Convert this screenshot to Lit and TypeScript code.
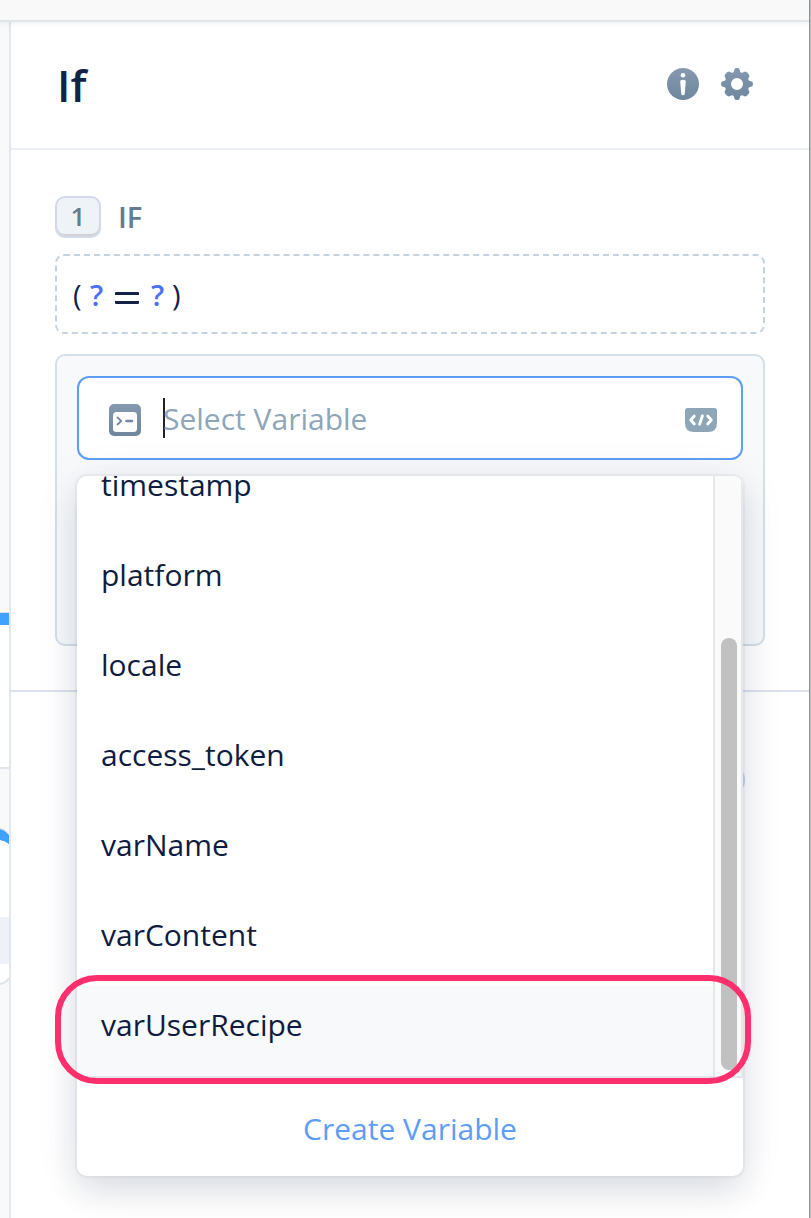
import { LitElement, html, css, svg } from "lit";
import { customElement } from "lit/decorators.js";
import { classMap } from "lit/directives/class-map.js";

const VARIABLES = ["timestamp", "platform", "locale", "access_token", "varName", "varContent", "varUserRecipe"];

const steel = (id: string) => svg`<defs><linearGradient id=${id} x1="0" y1="0" x2="0" y2="1">
  <stop offset="0" stop-color="#8599b0"></stop><stop offset="1" stop-color="#6e869d"></stop></linearGradient></defs>`;

const infoIcon = html`<svg width="32" height="32" viewBox="0 0 32 32">${steel("gi")}
  <circle cx="16" cy="16" r="16" fill="url(#gi)"></circle>
  <circle cx="16" cy="7.3" r="2.3" fill="#fff"></circle>
  <path d="M13.2 13.6Q13.2 11.7 16 11.7Q18.8 11.7 18.8 13.6L17.7 25.9Q17.6 27.2 16 27.2Q14.4 27.2 14.3 25.9Z" fill="#fff"></path></svg>`;

const gearIcon = html`<svg width="32" height="32" viewBox="0 0 32 32">${steel("gg")}
  <path fill="url(#gg)" fill-rule="evenodd" d="M13.5 1.2Q13.7 0 16 0Q18.3 0 18.5 1.2L19 3.2Q19.8 5.4 21.8 4.6L23.6 3.7Q25 3 26.8 5.2Q29 7 28.3 8.4L27.4 10.2Q26.6 12.2 28.8 13L30.8 13.5Q32 13.7 32 16Q32 18.3 30.8 18.5L28.8 19Q26.6 19.8 27.4 21.8L28.3 23.6Q29 25 26.8 26.8Q25 29 23.6 28.3L21.8 27.4Q19.8 26.6 19 28.8L18.5 30.8Q18.3 32 16 32Q13.7 32 13.5 30.8L13 28.8Q12.2 26.6 10.2 27.4L8.4 28.3Q7 29 5.2 26.8Q3 25 3.7 23.6L4.6 21.8Q5.4 19.8 3.2 19L1.2 18.5Q0 18.3 0 16Q0 13.7 1.2 13.5L3.2 13Q5.4 12.2 4.6 10.2L3.7 8.4Q3 7 5.2 5.2Q7 3 8.4 3.7L10.2 4.6Q12.2 5.4 13 3.2ZM16 10A6 6 0 1 0 16 22A6 6 0 1 0 16 10Z"></path></svg>`;

const consoleIcon = html`<svg width="32" height="32" viewBox="0 0 32 32">${steel("gc")}
  <rect width="32" height="32" rx="5" fill="url(#gc)"></rect>
  <rect x="4" y="8" width="24" height="20" rx="3.5" fill="#fff"></rect>
  <path d="M8.5 13.5L12.2 17L8.5 20.5" fill="none" stroke="#7489a0" stroke-width="1.9" stroke-linecap="round" stroke-linejoin="round"></path>
  <path d="M17.5 17H23" stroke="#7489a0" stroke-width="2.6" stroke-linecap="round"></path></svg>`;

const codeIcon = html`<svg width="32" height="24" viewBox="0 0 32 24">
  <path d="M2.5 0H29.5Q32 0 32 2.5V15Q32 24 23 24H9Q0 24 0 15V2.5Q0 0 2.5 0Z" fill="#8fa5b8"></path>
  <g fill="none" stroke="#fff" stroke-width="2.8" stroke-linecap="round" stroke-linejoin="round">
    <path d="M9.3 8L5.7 12L9.3 16"></path><path d="M22.7 8L26.3 12L22.7 16"></path><path d="M17.5 7.7L14.5 16.2"></path></g></svg>`;

const canvasEdge = html`<svg width="9" height="1196" viewBox="0 0 9 1196">
  <rect y="590" width="9" height="14" fill="#d8e2ea"></rect>
  <rect y="591" width="9" height="12" fill="#42a1ff"></rect>
  <rect y="603" width="9" height="142" fill="#fff"></rect>
  <rect y="745" width="9" height="2" fill="#dfe4ea"></rect>
  <path d="M0 807Q5 808 9 814V956Q6 961 0 962Z" fill="#fff"></path>
  <path d="M0 807Q5 808 9 813V822Q5 819 0 818Z" fill="#42a1ff"></path>
  <path d="M0 806.5Q5 807 9 812.5" fill="none" stroke="#cfd6dc" stroke-width="1"></path>
  <rect y="895" width="9" height="47" fill="#eef2f8"></rect>
  <path d="M0 962Q6 961 9 956" fill="none" stroke="#dfe4ea" stroke-width="2"></path></svg>`;

@customElement("variable-menu")
class VariableMenu extends LitElement {
  static styles = css`
    :host { display: block; height: 700px; background: #fff; border-radius: 10px; overflow: hidden; }
    .scroll { display: flex; height: 600px; overflow: hidden; border-bottom: 2px solid #dfe5ea; }
    .items { flex: 1; display: flex; flex-direction: column; justify-content: flex-end; }
    .item { flex: none; height: 90px; box-sizing: border-box; padding: 18px 24px 0; line-height: 41px; }
    .active { background: #f7f9fb; }
    .track { width: 30px; box-sizing: border-box; border: solid #e7e7e7; border-width: 0 2px; background: #fafafa; padding: 162px 4px 6px 6px; display: flex; }
    .thumb { flex: 1; background: #c1c1c1; border-radius: 8px; }
    .create { height: 98px; display: flex; justify-content: center; color: #5d9df5; line-height: 41px; padding-top: 30px; box-sizing: border-box; }
  `;
  render() {
    return html`
      <div class="scroll">
        <div class="items">
          ${VARIABLES.map((v) => html`<div class=${classMap({ item: true, active: v === "varUserRecipe" })}>${v}</div>`)}
        </div>
        <div class="track"><div class="thumb"></div></div>
      </div>
      <div class="create">Create Variable</div>`;
  }
}

@customElement("app-root")
class AppRoot extends LitElement {
  static styles = css`
    :host { display: flex; height: 1218px; overflow: hidden; background: #fff; color: #0f1c3f;
      font: 30px/41px "Open Sans", "Noto Sans", sans-serif; }
    svg { display: block; flex: none; }
    .page { flex: 1; min-width: 0; display: flex; flex-direction: column; }
    .topbar { flex: none; height: 20px; background: #f9f9f9; border-bottom: 2px solid #dfe6eb; box-shadow: 0 1px 5px rgba(100, 130, 150, 0.14); z-index: 1; }
    .main { flex: 1; display: flex; min-height: 0; }
    .canvas { width: 9px; background: #f9f9f9; border-right: 2px solid #e0e7ee; }
    .panel { flex: 1; min-width: 0; }
    .edge { flex: none; width: 2px; background: linear-gradient(90deg, #929292 50%, #bcbcbc 50%); }
    .header { display: flex; align-items: center; height: 126px; border-bottom: 2px solid #e9eff4; padding: 0 56px 0 46px; }
    .title { flex: 1; margin: 0; font-size: 44px; line-height: 60px; font-weight: 600; color: #142149; }
    .tools { display: flex; gap: 22px; padding-bottom: 2px; }
    .content { height: 542px; padding: 46px 44px 0; box-sizing: border-box; border-bottom: 2px solid #dbe1ee; }
    .step { display: flex; align-items: center; gap: 17px; height: 42px; color: #647c92; font-weight: 600; font-size: 29px; }
    .label { padding-bottom: 2px; }
    .num { width: 46px; height: 42px; box-sizing: border-box; border: 2px solid #d2d9e8; border-radius: 10px;
      background: #eef3f7; box-shadow: inset 0 -2px 0 #d2d2d6; text-align: center; font-size: 26px; line-height: 36px; }
    .expression { display: flex; align-items: center; height: 80px; box-sizing: border-box; margin-top: 16px; padding: 1px 0 0 16px;
      border: 2px dashed #c5d3e1; border-radius: 9px; white-space: pre; font-size: 29px; color: #142149; }
    .unknown { color: #4b70fa; font-weight: 600; }
    .paren-open { width: 17px; } .q1 { width: 25px; } .q2 { width: 21px; }
    .equals { width: 24px; height: 6px; border: solid #142149; border-width: 3px 0; border-radius: 1px; margin: 7px 12px 0 0; }
    .editor { position: relative; margin-top: 20px; height: 292px; box-sizing: border-box; padding: 20px; border: 2px solid #d4dfe9; border-radius: 10px; background: #f7f9fb; }
    .input { display: flex; align-items: center; height: 84px; box-sizing: border-box; padding: 0 24px 0 30px; border: 2px solid #5d9df5; border-radius: 12px; background: #fff; }
    .console { padding-top: 4px; }
    .caret { width: 2px; height: 40px; margin-left: 22px; background: #222; }
    .placeholder { flex: 1; color: #8fa5b8; margin-left: -2px; }
    .code { padding-top: 4px; }
    .menu { position: absolute; left: 20px; right: 20px; top: 120px; z-index: 2; box-shadow: 0 0 0 2px rgba(19, 33, 68, 0.04), 0 16px 32px rgba(19, 33, 68, 0.11), 0 4px 48px rgba(19, 33, 68, 0.07); }
    .marker { position: absolute; left: -2px; width: 684px; top: 619px; height: 97px; z-index: 3; border: 6px solid #ff2e6c; border-radius: 42px; }
    .below { height: 24px; width: 200px; margin: 74px 64px 0 auto; border-radius: 13px; border: 2px solid #cfd8e6; }
  `;
  render() {
    return html`
      <div class="page">
        <div class="topbar"></div>
        <div class="main">
          <div class="canvas">${canvasEdge}</div>
          <div class="panel">
            <div class="header">
              <h1 class="title">If</h1>
              <div class="tools">${infoIcon}${gearIcon}</div>
            </div>
            <div class="content">
              <div class="step"><span class="num">1</span><span class="label">IF</span></div>
              <div class="expression"><span class="paren-open">(</span><span class="unknown q1">?</span><span class="equals"></span><span class="unknown q2">?</span><span>)</span></div>
              <div class="editor">
                <div class="input">
                  <span class="console">${consoleIcon}</span><span class="caret"></span>
                  <span class="placeholder">Select Variable</span>
                  <span class="code">${codeIcon}</span>
                </div>
                <variable-menu class="menu"></variable-menu>
                <div class="marker"></div>
              </div>
            </div>
            <div class="below"></div>
          </div>
        </div>
      </div>
      <div class="edge"></div>`;
  }
}
